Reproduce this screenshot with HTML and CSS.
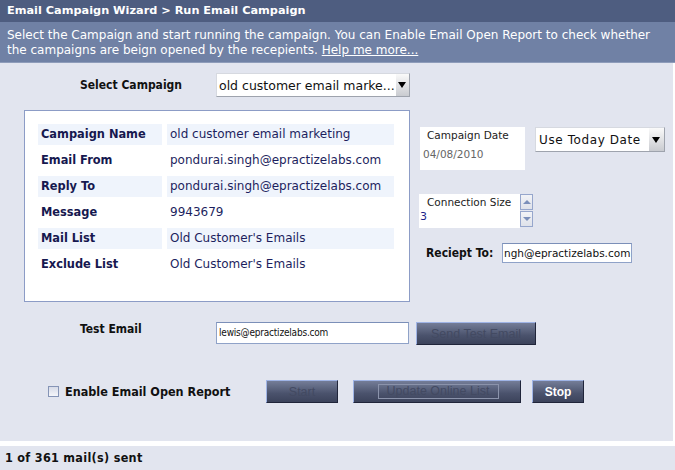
FILE: index.html
```html
<!DOCTYPE html>
<html lang="en">
<head>
  <meta charset="UTF-8">
  <title>Run Email Campaign</title>
  <link rel="stylesheet" href="styles.css">
</head>
<body>
  <div class="wizard">
    <div class="title">Email Campaign Wizard &gt; Run Email Campaign</div>
    <div class="intro">
      <span class="intro-line">Select the Campaign and start running the campaign. You can Enable Email Open Report to check whether</span>
      <span class="intro-line">the campaigns are beign opened by the recepients. <a href="#">Help me more...</a></span>
    </div>

    <div class="panel">
      <div class="campaign-row">
        <span class="field-label">Select Campaign</span>
        <div class="combo campaign-combo">
          <span class="combo-text">old customer email marke...</span>
          <span class="combo-arrow"></span>
        </div>
      </div>

      <div class="details">
        <div class="info-box">
          <div class="info-grid">
            <div class="info-key shade">Campaign Name</div>
            <div class="info-val shade">old customer email marketing</div>
            <div class="info-key">Email From</div>
            <div class="info-val">pondurai.singh@epractizelabs.com</div>
            <div class="info-key shade">Reply To</div>
            <div class="info-val shade">pondurai.singh@epractizelabs.com</div>
            <div class="info-key">Message</div>
            <div class="info-val">9943679</div>
            <div class="info-key shade">Mail List</div>
            <div class="info-val shade">Old Customer's Emails</div>
            <div class="info-key">Exclude List</div>
            <div class="info-val">Old Customer's Emails</div>
          </div>
        </div>

        <div class="side">
          <div class="date-row">
            <div class="date-box">
              <div class="box-caption">Campaign Date</div>
              <div class="date-value">04/08/2010</div>
            </div>
            <div class="combo date-combo">
              <span class="combo-text">Use Today Date</span>
              <span class="combo-arrow"></span>
            </div>
          </div>

          <div class="conn-row">
            <div class="conn-box">
              <div class="box-caption">Connection Size</div>
              <div class="conn-value">3</div>
            </div>
            <div class="spinner">
              <span class="spin-btn"><span class="spin-up"></span></span>
              <span class="spin-btn"><span class="spin-down"></span></span>
            </div>
          </div>

          <div class="receipt-row">
            <span class="receipt-label">Reciept To:</span>
            <div class="text-input receipt-input">ngh@epractizelabs.com</div>
          </div>
        </div>
      </div>

      <div class="test-row">
        <span class="field-label">Test Email</span>
        <div class="text-input test-input">lewis@epractizelabs.com</div>
        <button class="btn disabled send-btn">Send Test Email</button>
      </div>

      <div class="action-row">
        <label class="check-label"><span class="check"></span>Enable Email Open Report</label>
        <button class="btn disabled start-btn">Start</button>
        <button class="btn disabled update-btn"><span class="focus-ring">Update Online List</span></button>
        <button class="btn stop-btn">Stop</button>
      </div>
    </div>

    <div class="status">1 of 361 mail(s) sent</div>
  </div>
</body>
</html>
```

FILE: styles.css
```css
body {
  margin: 0;
  background: #fff;
  font-family: "DejaVu Sans", Verdana, sans-serif;
}
.wizard {
  width: 675px;
  height: 470px;
  display: flex;
  flex-direction: column;
}
.title {
  height: 22px;
  background: #4e5d80;
  color: #fff;
  font-weight: bold;
  font-size: 11.3px;
  line-height: 22px;
  padding-left: 7px;
}
.intro {
  height: 41px;
  box-sizing: border-box;
  background: #7081a5;
  color: #fff;
  font-size: 12px;
  line-height: 15px;
  padding: 6px 0 0 7px;
  border-bottom: 1px solid #8e9cba;
}
.intro-line {
  display: block;
  white-space: nowrap;
}
.intro a {
  color: #fff;
}

/* main area */
.panel {
  height: 378px;
  width: 673px;
  background: #e2e5ef;
  padding-top: 10px;
  box-sizing: border-box;
}
.field-label, .receipt-label, .check-label, .status {
  font-family: "DejaVu Sans Condensed", "DejaVu Sans", sans-serif;
  font-weight: bold;
  font-size: 12px;
  color: #111;
}
.campaign-row {
  display: flex;
  align-items: center;
  padding-left: 80px;
  height: 24px;
}
.field-label {
  width: 136px;
  flex: none;
}
.combo {
  display: flex;
  align-items: center;
  background: #fff;
  border: 1px solid #d6d9e0;
  border-right-color: #9ea3ad;
  border-bottom-color: #9ea3ad;
  box-sizing: border-box;
}
.combo-text {
  flex: 1;
  color: #111;
  white-space: nowrap;
  overflow: hidden;
}
.combo-arrow {
  width: 13px;
  flex: none;
  align-self: stretch;
  background: linear-gradient(#fafafa, #c9cbd0);
  position: relative;
}
.combo-arrow::after {
  content: "";
  position: absolute;
  left: 2px;
  top: 50%;
  margin-top: -3px;
  border-left: 4.5px solid transparent;
  border-right: 4.5px solid transparent;
  border-top: 6px solid #000;
}
.campaign-combo {
  width: 194px;
  height: 24px;
  font-size: 12.5px;
  padding-left: 2px;
}

.details {
  display: flex;
  margin-top: 13px;
  padding-left: 24px;
}
.info-box {
  width: 386px;
  height: 192px;
  box-sizing: border-box;
  background: #fff;
  border: 1px solid #8c9cc6;
  padding: 13px 0 0 13px;
}
.info-grid {
  display: grid;
  grid-template-columns: 124px 227px;
  grid-auto-rows: 21px;
  gap: 5px;
  color: #1d1f5e;
  font-size: 12px;
}
.info-grid > div {
  line-height: 21px;
  padding-left: 3px;
  white-space: nowrap;
}
.info-key {
  font-weight: bold;
  font-size: 11.4px;
  color: #16184f;
}
.shade {
  background: #eff4fc;
}

.side {
  margin-left: 10px;
  padding-top: 17px;
}
.date-row {
  display: flex;
  gap: 10px;
}
.date-box {
  width: 105px;
  height: 43px;
  background: #fff;
  padding: 2px 0 0 7px;
  box-sizing: border-box;
}
.box-caption {
  font-size: 10.5px;
  color: #222;
}
.date-value {
  font-size: 10.5px;
  color: #666;
  margin: 7px 0 0 -4px;
}
.date-combo {
  width: 130px;
  height: 25px;
  font-size: 12px;
  letter-spacing: 0.6px;
  padding-left: 3px;
}
.date-combo .combo-arrow {
  width: 15px;
}
.date-combo .combo-arrow::after {
  left: 3px;
}

.conn-row {
  display: flex;
  margin-top: 24px;
  margin-left: -1px;
}
.conn-box {
  width: 101px;
  height: 34px;
  background: #fff;
  padding: 2px 0 0 8px;
  box-sizing: border-box;
}
.conn-value {
  font-size: 11px;
  color: #1d1f8a;
  margin: 2px 0 0 -7px;
}
.spinner {
  display: flex;
  flex-direction: column;
  gap: 1px;
}
.spin-btn {
  width: 13px;
  height: 16px;
  box-sizing: border-box;
  border: 1px solid #96a6cc;
  background: linear-gradient(#f2f3f7, #dfe2ea);
  display: flex;
  align-items: center;
  justify-content: center;
}
.spin-up {
  border-left: 4px solid transparent;
  border-right: 4px solid transparent;
  border-bottom: 4px solid #7b8fba;
}
.spin-down {
  border-left: 4px solid transparent;
  border-right: 4px solid transparent;
  border-top: 4px solid #7b8fba;
}

.receipt-row {
  display: flex;
  align-items: center;
  margin-top: 15px;
  padding-left: 6px;
}
.receipt-label {
  width: 76px;
}
.text-input {
  background: #fff;
  border: 1px solid #8fa2c8;
  border-top-color: #7b8fb8;
  box-sizing: border-box;
  color: #111;
  white-space: nowrap;
  overflow: hidden;
}
.receipt-input {
  width: 130px;
  height: 20px;
  line-height: 18px;
  font-size: 10.5px;
  padding-left: 1px;
}

.test-row {
  display: flex;
  align-items: flex-start;
  margin-top: 20px;
  padding-left: 80px;
}
.test-input {
  width: 193px;
  height: 22px;
  line-height: 20px;
  font-family: "DejaVu Sans Condensed", "DejaVu Sans", sans-serif;
  font-size: 10px;
  letter-spacing: -0.2px;
  padding-left: 2px;
}

.btn {
  height: 23px;
  box-sizing: border-box;
  margin: 0;
  padding: 0;
  background: linear-gradient(#747d98, #4a526c 60%, #3c435b);
  border: 1px solid #20253a;
  border-top-color: #9fb4e6;
  border-left-color: #9fb4e6;
  font-family: "Liberation Sans", Arial, sans-serif;
  font-weight: bold;
  font-size: 12px;
  color: #fff;
  display: flex;
  align-items: center;
  justify-content: center;
}
.btn.disabled {
  color: #434a62;
  font-weight: normal;
  font-size: 12.5px;
}
.send-btn {
  width: 120px;
  margin-left: 7px;
}

.action-row {
  display: flex;
  align-items: center;
  margin-top: 35px;
  padding-left: 48px;
}
.check-label {
  display: flex;
  align-items: center;
  width: 218px;
  font-size: 12.5px;
}
.check {
  width: 11px;
  height: 11px;
  box-sizing: border-box;
  border: 1px solid #8594b6;
  background: linear-gradient(#d7dbe8, #f5f6fa);
  margin-right: 6px;
}
.start-btn {
  width: 72px;
}
.update-btn {
  width: 168px;
  margin-left: 15px;
}
.focus-ring {
  border: 1px solid #8b93ab;
  width: 119px;
  height: 13px;
  line-height: 13px;
  margin-left: 2px;
  text-align: center;
}
.stop-btn {
  width: 52px;
  margin-left: 11px;
}

.status {
  margin-top: 5px;
  flex: 1;
  background: #e2e5ef;
  padding-left: 5px;
  line-height: 24px;
  font-size: 12.5px;
  letter-spacing: 0.3px;
}
```
